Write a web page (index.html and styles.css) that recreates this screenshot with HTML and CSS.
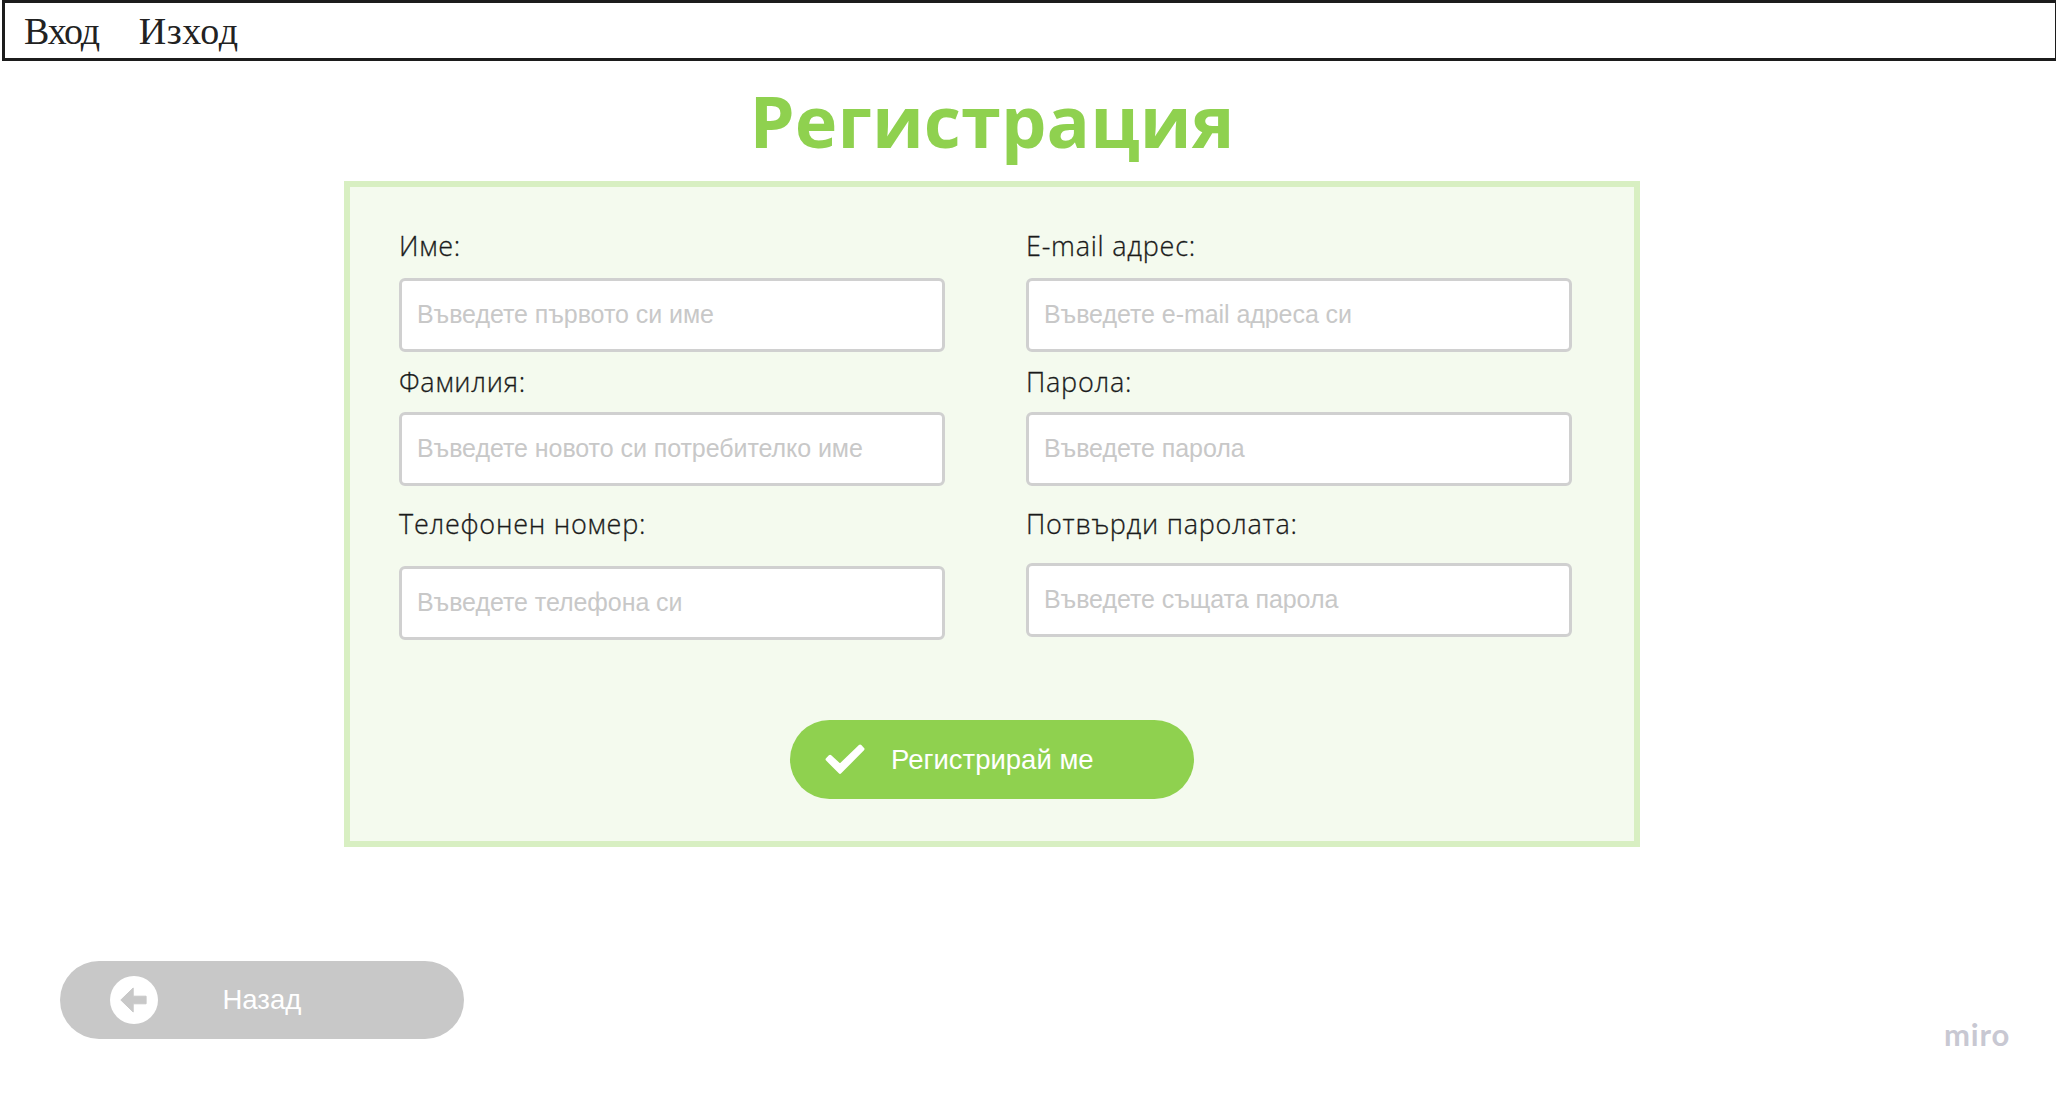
FILE: index.html
```html
<!DOCTYPE html>
<html lang="bg">
<head>
<meta charset="utf-8">
<title>Регистрация</title>
<link rel="stylesheet" href="styles.css">
</head>
<body>
<nav class="topbar">
  <a class="topbar-link topbar-login">Вход</a>
  <a class="topbar-link topbar-logout">Изход</a>
</nav>
<main class="main">
  <h1 class="title">Регистрация</h1>
  <form class="panel">
    <div class="columns">
      <div class="column">
        <label class="label" for="first">Име:</label>
        <input class="input" id="first" placeholder="Въведете първото си име">
        <label class="label label-second" for="last">Фамилия:</label>
        <input class="input input-second" id="last" placeholder="Въведете новото си потребителко име">
        <label class="label label-third" for="phone">Телефонен номер:</label>
        <input class="input input-phone" id="phone" placeholder="Въведете телефона си">
      </div>
      <div class="column">
        <label class="label" for="mail">E-mail адрес:</label>
        <input class="input" id="mail" placeholder="Въведете e-mail адреса си">
        <label class="label label-second" for="pass">Парола:</label>
        <input class="input input-second" id="pass" placeholder="Въведете парола">
        <label class="label label-third" for="confirm">Потвърди паролата:</label>
        <input class="input input-confirm" id="confirm" placeholder="Въведете същата парола">
      </div>
    </div>
    <button class="button submit" type="button">
      <svg class="check" viewBox="0 0 40 31" width="40" height="31"><path d="M2.3 15.4 5.1 12.5 15 21.6 35.1 2.3 37.8 5.1 15 28.1Z" fill="#fff" stroke="#fff" stroke-width="3.4" stroke-linejoin="round"/></svg>
      <span>Регистрирай ме</span>
    </button>
  </form>
</main>
<footer class="footer">
  <button class="button back" type="button">
    <svg viewBox="0 0 48 48" width="48" height="48"><circle cx="24" cy="24" r="24" fill="#fff"/><path d="M10.8 24 23.2 12V20.2H36.1V27.8H23.2V36Z" fill="#c8c8c8" stroke="#c8c8c8" stroke-width="1" stroke-linejoin="round"/></svg>
    <span>Назад</span>
  </button>
  <span class="brand">miro</span>
</footer>
</body>
</html>
```
FILE: styles.css
```css
* { box-sizing: border-box; }
html { overflow: hidden; }
body {
  margin: 0;
  height: 1094px;
  background: #fff;
  overflow: hidden;
}

.topbar {
  display: flex;
  gap: 40px;
  width: 2056px;
  height: 61px;
  margin-left: 2px;
  padding: 7px 0 0 19px;
  border: 3px solid #1c1c1c;
}
.topbar-link {
  font: 38px/42px "Liberation Serif", serif;
  color: #222;
}
.topbar-login { letter-spacing: -1.2px; }
.topbar-logout { letter-spacing: 0.5px; }

.main {
  width: 1296px;
  margin: 10px 0 0 344px;
}
.title {
  margin: 0 0 12px;
  font: bold 72px/98px "Open Sans", sans-serif;
  letter-spacing: 0.1px;
  text-align: center;
  color: #8fd14f;
}
.panel {
  display: flex;
  flex-direction: column;
  height: 666px;
  padding: 40px 49px 0;
  border: 6px solid #d8efc2;
  background: #f4faee;
}
.columns {
  display: flex;
  gap: 81px;
  height: 420px;
}
.column {
  display: flex;
  flex-direction: column;
  width: 546px;
}
.label {
  font: 300 27px/38px "Open Sans", sans-serif;
  letter-spacing: 0.75px;
  color: #1a1a1a;
  -webkit-text-stroke: 0.3px #1a1a1a;
}
.label-second { margin-top: 11px; }
.label-third { margin-top: 19px; }
.input {
  width: 546px;
  height: 74px;
  margin: 13px 0 0;
  padding: 0 14px 1px 15px;
  border: 3px solid #d0d0d0;
  border-radius: 6px;
  background: #fff;
  font: 25px "Liberation Sans", Arial, sans-serif;
  letter-spacing: -0.06px;
}
.input::placeholder {
  color: #c8c8c8;
  opacity: 1;
}
.input-second { margin-top: 11px; }
.input-phone { margin-top: 23px; }
.input-confirm { margin-top: 20px; }

.button {
  display: flex;
  align-items: center;
  width: 404px;
  padding: 0;
  border: 0;
  border-radius: 40px;
  font: 27.5px "Liberation Sans", Arial, sans-serif;
  color: #fff;
}
.submit {
  gap: 26px;
  height: 79px;
  margin: 73px 0 0 391px;
  padding-left: 35px;
  background: #8fd14f;
}

.footer {
  display: flex;
  justify-content: space-between;
  margin: 114px 46px 0 60px;
}
.back {
  gap: 65px;
  height: 78px;
  padding-left: 49.5px;
  background: #c8c8c8;
}
.brand {
  margin-top: 55px;
  font: bold 31px/37px Lato, sans-serif;
  letter-spacing: 0.8px;
  color: #c8c8d2;
}
```
